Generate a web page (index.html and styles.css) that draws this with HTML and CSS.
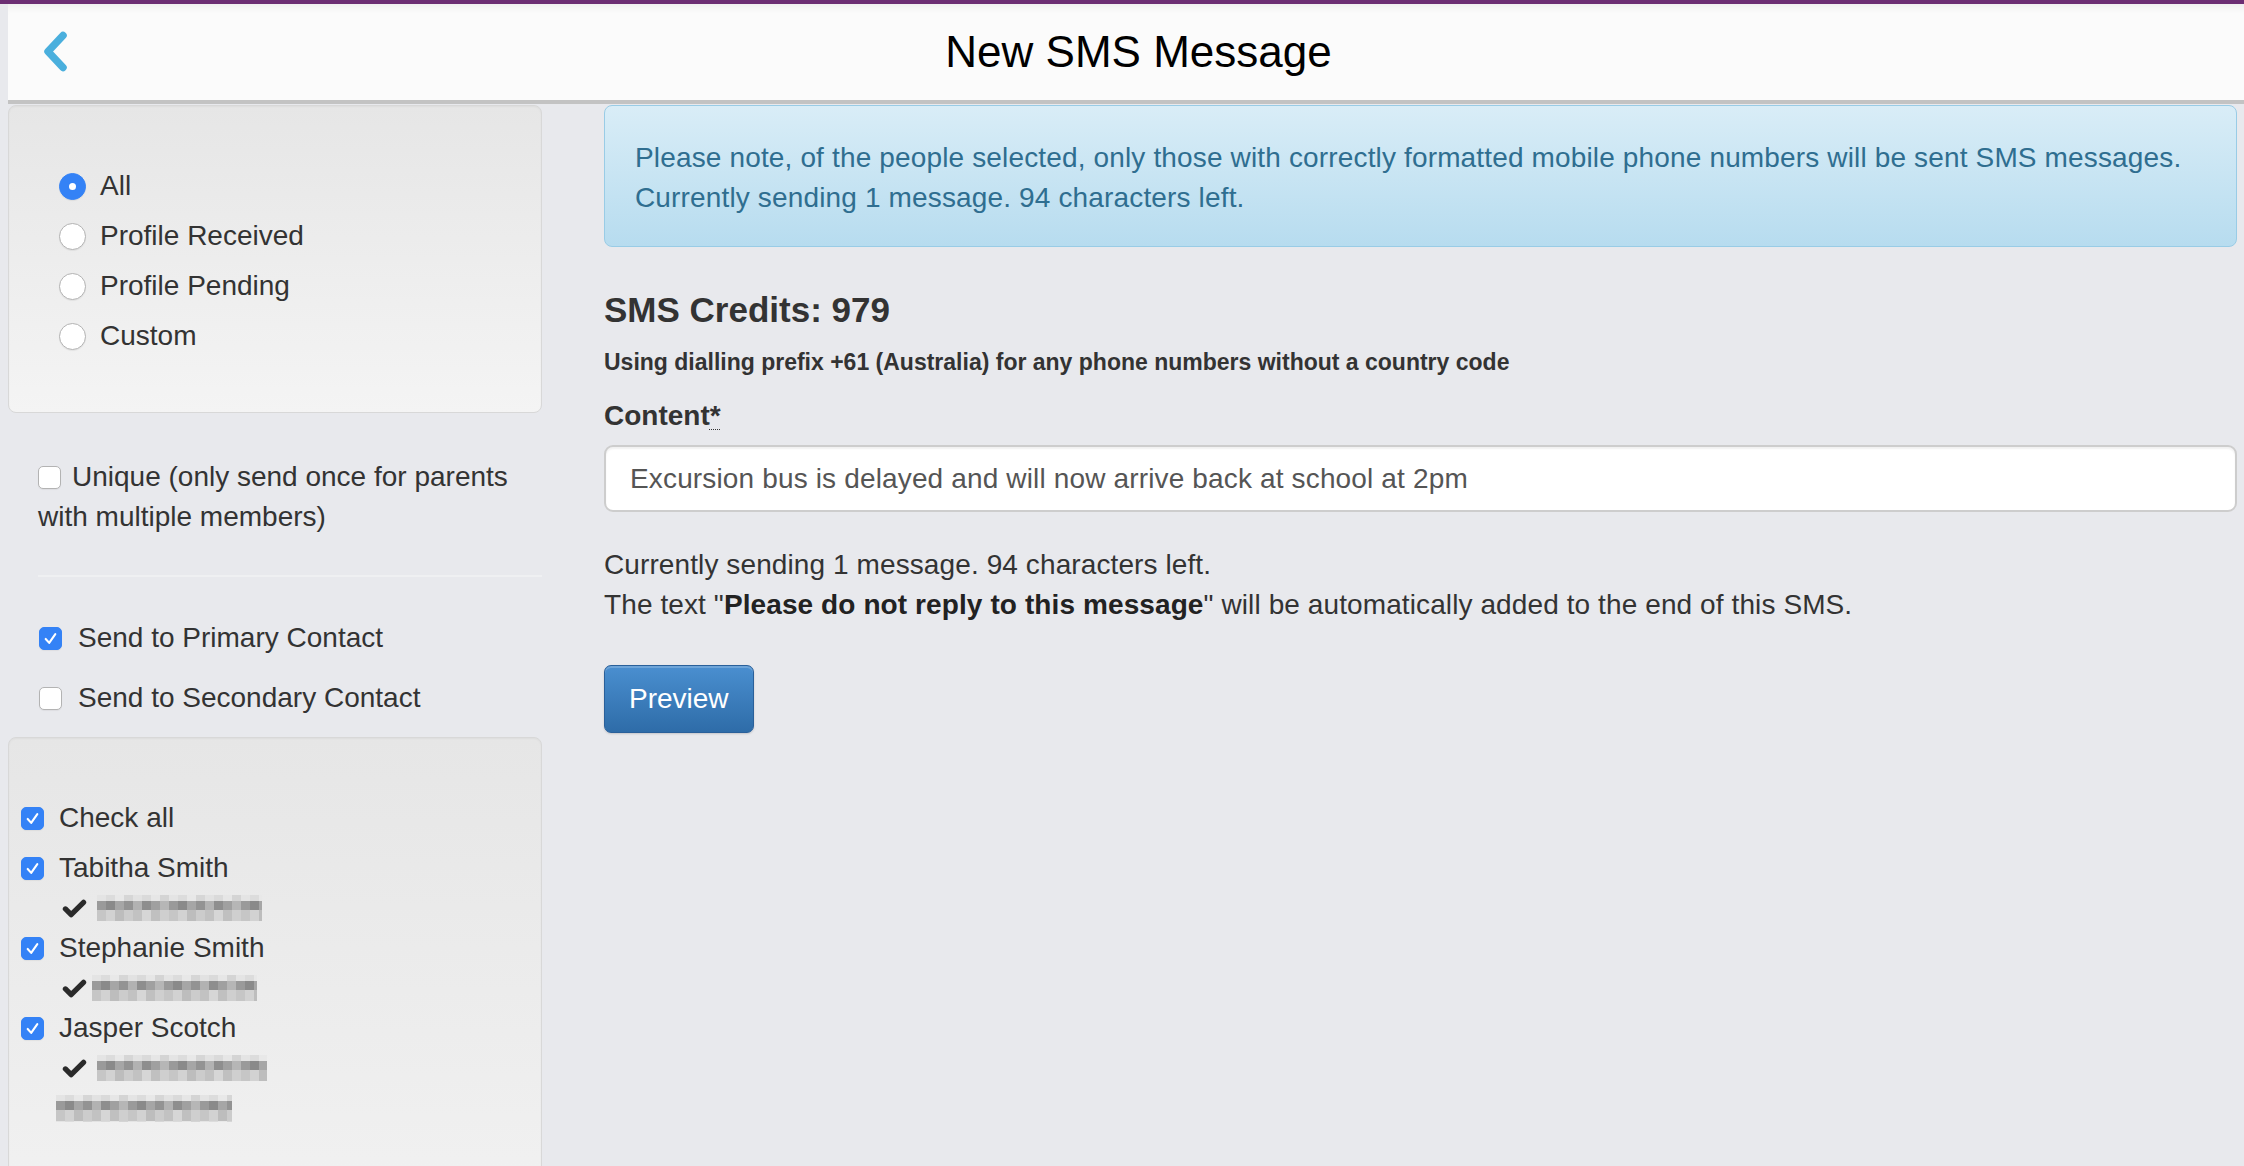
FILE: index.html
```html
<!DOCTYPE html>
<html lang="en">
<head>
<meta charset="utf-8">
<title>New SMS Message</title>
<link rel="stylesheet" href="styles.css">
</head>
<body>
<svg class="defs" width="0" height="0" aria-hidden="true">
  <defs>
    <pattern id="mosaic" width="72" height="26" patternUnits="userSpaceOnUse">
      <rect x="0" y="0" width="72" height="26" fill="#d9d9d9"/>
      <rect x="0" y="0" width="9" height="6" fill="#e4e4e4"/>
      <rect x="9" y="0" width="9" height="6" fill="#dcdcdc"/>
      <rect x="18" y="0" width="9" height="6" fill="#e8e8e8"/>
      <rect x="27" y="0" width="9" height="6" fill="#d6d6d6"/>
      <rect x="36" y="0" width="9" height="6" fill="#e2e2e2"/>
      <rect x="45" y="0" width="9" height="6" fill="#dadada"/>
      <rect x="54" y="0" width="9" height="6" fill="#e6e6e6"/>
      <rect x="63" y="0" width="9" height="6" fill="#d4d4d4"/>
      <rect x="0" y="6" width="9" height="9" fill="#9a9a9a"/>
      <rect x="9" y="6" width="9" height="9" fill="#8a8a8a"/>
      <rect x="18" y="6" width="9" height="9" fill="#a6a6a6"/>
      <rect x="27" y="6" width="9" height="9" fill="#939393"/>
      <rect x="36" y="6" width="9" height="9" fill="#b2b2b2"/>
      <rect x="45" y="6" width="9" height="9" fill="#8e8e8e"/>
      <rect x="54" y="6" width="9" height="9" fill="#a0a0a0"/>
      <rect x="63" y="6" width="9" height="9" fill="#b6b6b6"/>
      <rect x="0" y="15" width="9" height="11" fill="#c6c6c6"/>
      <rect x="9" y="15" width="9" height="11" fill="#d2d2d2"/>
      <rect x="18" y="15" width="9" height="11" fill="#bdbdbd"/>
      <rect x="27" y="15" width="9" height="11" fill="#cccccc"/>
      <rect x="36" y="15" width="9" height="11" fill="#c2c2c2"/>
      <rect x="45" y="15" width="9" height="11" fill="#d6d6d6"/>
      <rect x="54" y="15" width="9" height="11" fill="#c0c0c0"/>
      <rect x="63" y="15" width="9" height="11" fill="#cfcfcf"/>
    </pattern>
    <symbol id="ok" viewBox="0 0 26 22">
      <polyline points="3.5,11.5 9.5,17.5 22.5,4.5" fill="none" stroke="#2a2a2a" stroke-width="5.5" stroke-linecap="round" stroke-linejoin="round"/>
    </symbol>
    <symbol id="tick" viewBox="0 0 24 24">
      <polyline points="6.5,12.5 10.5,17 17.5,7" fill="none" stroke="#fff" stroke-width="2.4" stroke-linecap="round" stroke-linejoin="round"/>
    </symbol>
  </defs>
</svg>

<div class="topbar"></div>
<div class="page">
  <header class="header">
    <a class="back" href="#" aria-label="Back">
      <svg width="26" height="42" viewBox="0 0 26 42"><polyline points="21,4.5 6,20.5 21,36.5" fill="none" stroke="#4aafdd" stroke-width="7.5" stroke-linecap="round" stroke-linejoin="round"/></svg>
    </a>
    <h1 class="title">New SMS Message</h1>
  </header>

  <div class="main">
    <aside class="sidebar">
      <div class="well well-filter">
        <ul class="radio-list">
          <li class="radio-row"><span class="radio radio-on"></span>All</li>
          <li class="radio-row"><span class="radio"></span>Profile Received</li>
          <li class="radio-row"><span class="radio"></span>Profile Pending</li>
          <li class="radio-row"><span class="radio"></span>Custom</li>
        </ul>
      </div>

      <p class="unique"><span class="cb cb-inline"></span>Unique (only send once for parents with multiple members)</p>
      <hr class="divider">
      <div class="contact-row"><span class="cb cb-on"><svg width="23" height="23"><use href="#tick"/></svg></span>Send to Primary Contact</div>
      <div class="contact-row contact-row-2"><span class="cb"></span>Send to Secondary Contact</div>

      <div class="well well-people">
        <div class="person-row check-all"><span class="cb cb-on"><svg width="23" height="23"><use href="#tick"/></svg></span>Check all</div>
        <div class="person-row"><span class="cb cb-on"><svg width="23" height="23"><use href="#tick"/></svg></span>Tabitha Smith</div>
        <div class="phone-row"><svg class="ok" width="25" height="21"><use href="#ok"/></svg><svg class="blur" width="165" height="26"><rect width="165" height="26" fill="url(#mosaic)"/></svg></div>
        <div class="person-row"><span class="cb cb-on"><svg width="23" height="23"><use href="#tick"/></svg></span>Stephanie Smith</div>
        <div class="phone-row"><svg class="ok" width="25" height="21"><use href="#ok"/></svg><svg class="blur blur-2" width="165" height="26"><rect width="165" height="26" fill="url(#mosaic)"/></svg></div>
        <div class="person-row"><span class="cb cb-on"><svg width="23" height="23"><use href="#tick"/></svg></span>Jasper Scotch</div>
        <div class="phone-row"><svg class="ok" width="25" height="21"><use href="#ok"/></svg><svg class="blur" width="170" height="26"><rect width="170" height="26" fill="url(#mosaic)"/></svg></div>
        <div class="phone-row phone-extra"><svg class="blur" width="176" height="27"><rect width="176" height="27" fill="url(#mosaic)"/></svg></div>
      </div>
    </aside>

    <section class="content">
      <div class="alert">Please note, of the people selected, only those with correctly formatted mobile phone numbers will be sent SMS messages.<br>Currently sending 1 message. 94 characters left.</div>

      <h4 class="credits">SMS Credits: 979</h4>
      <p class="prefix">Using dialling prefix +61 (Australia) for any phone numbers without a country code</p>

      <label class="field-label" for="content">Content<abbr title="required">*</abbr></label>
      <input class="field-input" id="content" type="text" value="Excursion bus is delayed and will now arrive back at school at 2pm">

      <p class="info">Currently sending 1 message. 94 characters left.<br>The text "<strong>Please do not reply to this message</strong>" will be automatically added to the end of this SMS.</p>

      <button class="btn-preview" type="button">Preview</button>
    </section>
  </div>
</div>
</body>
</html>
```

FILE: styles.css
```css
* { box-sizing: border-box; }

html, body {
  margin: 0;
  padding: 0;
}

body {
  background: #e8e9ed;
  color: #333;
  font-family: "Liberation Sans", Arial, Helvetica, sans-serif;
  font-size: 28px;
  line-height: 40px;
  overflow: hidden;
  height: 1166px;
}

.defs { position: absolute; width: 0; height: 0; }

.topbar {
  height: 4px;
  background: #6c2e73;
}

.page {
  padding-left: 8px;
}

/* Header */
.header {
  height: 100px;
  background: #fbfbfb;
  border-bottom: 4px solid #c3c3c3;
  display: flex;
  align-items: center;
  box-shadow: inset 0 10px 10px -8px rgba(0, 0, 0, 0.07);
}

.back {
  display: flex;
  margin-left: 34px;
  width: 26px;
  height: 42px;
}

.title {
  flex: 1;
  margin: 0;
  padding-right: 35px;
  text-align: center;
  font-size: 44px;
  font-weight: normal;
  color: #000;
  line-height: 50px;
}

/* Main layout */
.main {
  display: flex;
  gap: 62px;
  padding-right: 7px;
}

.sidebar {
  width: 534px;
  flex: none;
}

.content {
  flex: 1;
  min-width: 0;
}

/* Wells */
.well {
  border: 1px solid #d8d8d8;
  border-radius: 8px;
  background: linear-gradient(#e6e6e6, #f4f4f4);
  box-shadow: inset 0 1px 2px rgba(0, 0, 0, 0.04);
}

.well-filter {
  margin-top: 1px;
  padding: 60px 0 56px 50px;
}

.radio-list {
  list-style: none;
  margin: 0;
  padding: 0;
  display: flex;
  flex-direction: column;
  gap: 10px;
}

.radio-row {
  display: flex;
  align-items: center;
  height: 40px;
}

.radio {
  width: 27px;
  height: 27px;
  border-radius: 50%;
  background: #fff;
  border: 1px solid #b3b3b3;
  box-shadow: 0 1px 1px rgba(0, 0, 0, 0.06);
  margin-right: 14px;
  flex: none;
  display: flex;
  align-items: center;
  justify-content: center;
}

.radio-on {
  background: #3482f6;
  border-color: #3482f6;
}

.radio-on::after {
  content: "";
  width: 7px;
  height: 7px;
  border-radius: 50%;
  background: #fff;
}

/* Checkboxes */
.cb {
  width: 23px;
  height: 23px;
  border-radius: 5px;
  background: #fff;
  border: 1px solid #b3b3b3;
  box-shadow: 0 1px 1px rgba(0, 0, 0, 0.05);
  flex: none;
  display: inline-flex;
  align-items: center;
  justify-content: center;
}

.cb svg { display: block; }

.cb-on {
  background: #3482f6;
  border-color: #3482f6;
}

.cb-inline {
  display: inline-block;
  vertical-align: -3px;
  margin-right: 11px;
}

.unique {
  margin: 44px 0 0;
  padding-left: 30px;
}

.divider {
  margin: 38px 0 0 30px;
  border: 0;
  border-top: 2px solid #eff0f2;
  height: 0;
}

.contact-row {
  display: flex;
  align-items: center;
  height: 40px;
  margin-top: 41px;
  padding-left: 31px;
}

.contact-row .cb { margin-right: 16px; }

.contact-row-2 { margin-top: 20px; }

/* People list */
.well-people {
  margin-top: 19px;
  padding: 60px 0 200px 12px;
}

.person-row {
  display: flex;
  align-items: center;
  height: 40px;
}

.person-row .cb { margin-right: 15px; }

.check-all { margin-bottom: 10px; }

.phone-row {
  display: flex;
  align-items: center;
  height: 40px;
  padding-left: 41px;
}

.phone-row .ok {
  flex: none;
  margin-right: 10px;
}

.phone-row .blur-2 { margin-left: -5px; }

.phone-extra { padding-left: 35px; }

/* Content */
.alert {
  margin-top: 1px;
  border: 1px solid #99cce6;
  border-radius: 8px;
  background: linear-gradient(#d9edf7, #b7dcef);
  color: #2f6e90;
  padding: 32px 30px 28px 30px;
  letter-spacing: 0.15px;
}

.credits {
  margin: 43px 0 0;
  font-size: 35px;
  line-height: 40px;
  font-weight: bold;
  color: #333;
}

.prefix {
  margin: 12px 0 0;
  font-size: 23px;
  line-height: 40px;
  font-weight: bold;
  color: #333;
}

.field-label {
  display: block;
  margin-top: 14px;
  font-weight: bold;
  line-height: 40px;
}

.field-label abbr {
  text-decoration: underline dotted;
  text-decoration-thickness: 1px;
  text-underline-offset: 4px;
  border: 0;
}

.field-input {
  display: block;
  width: 100%;
  height: 67px;
  margin-top: 9px;
  padding: 0 24px;
  border: 2px solid #cdcdcd;
  border-radius: 9px;
  background: #fff;
  box-shadow: inset 0 2px 2px rgba(0, 0, 0, 0.06);
  font-family: inherit;
  font-size: 28px;
  letter-spacing: 0.15px;
  color: #555;
  outline: none;
}

.info {
  margin: 33px 0 0;
  letter-spacing: 0.1px;
}

.info strong { color: #222; }

.btn-preview {
  display: block;
  margin-top: 40px;
  padding: 13px 24px;
  border: 1px solid #2a609a;
  border-radius: 7px;
  background: linear-gradient(#4a8fd0, #2e6ca8);
  box-shadow: inset 0 2px 0 rgba(255, 255, 255, 0.2), 0 1px 2px rgba(0, 0, 0, 0.15);
  color: #fff;
  font-family: inherit;
  font-size: 28px;
  line-height: 40px;
  cursor: pointer;
}
```
